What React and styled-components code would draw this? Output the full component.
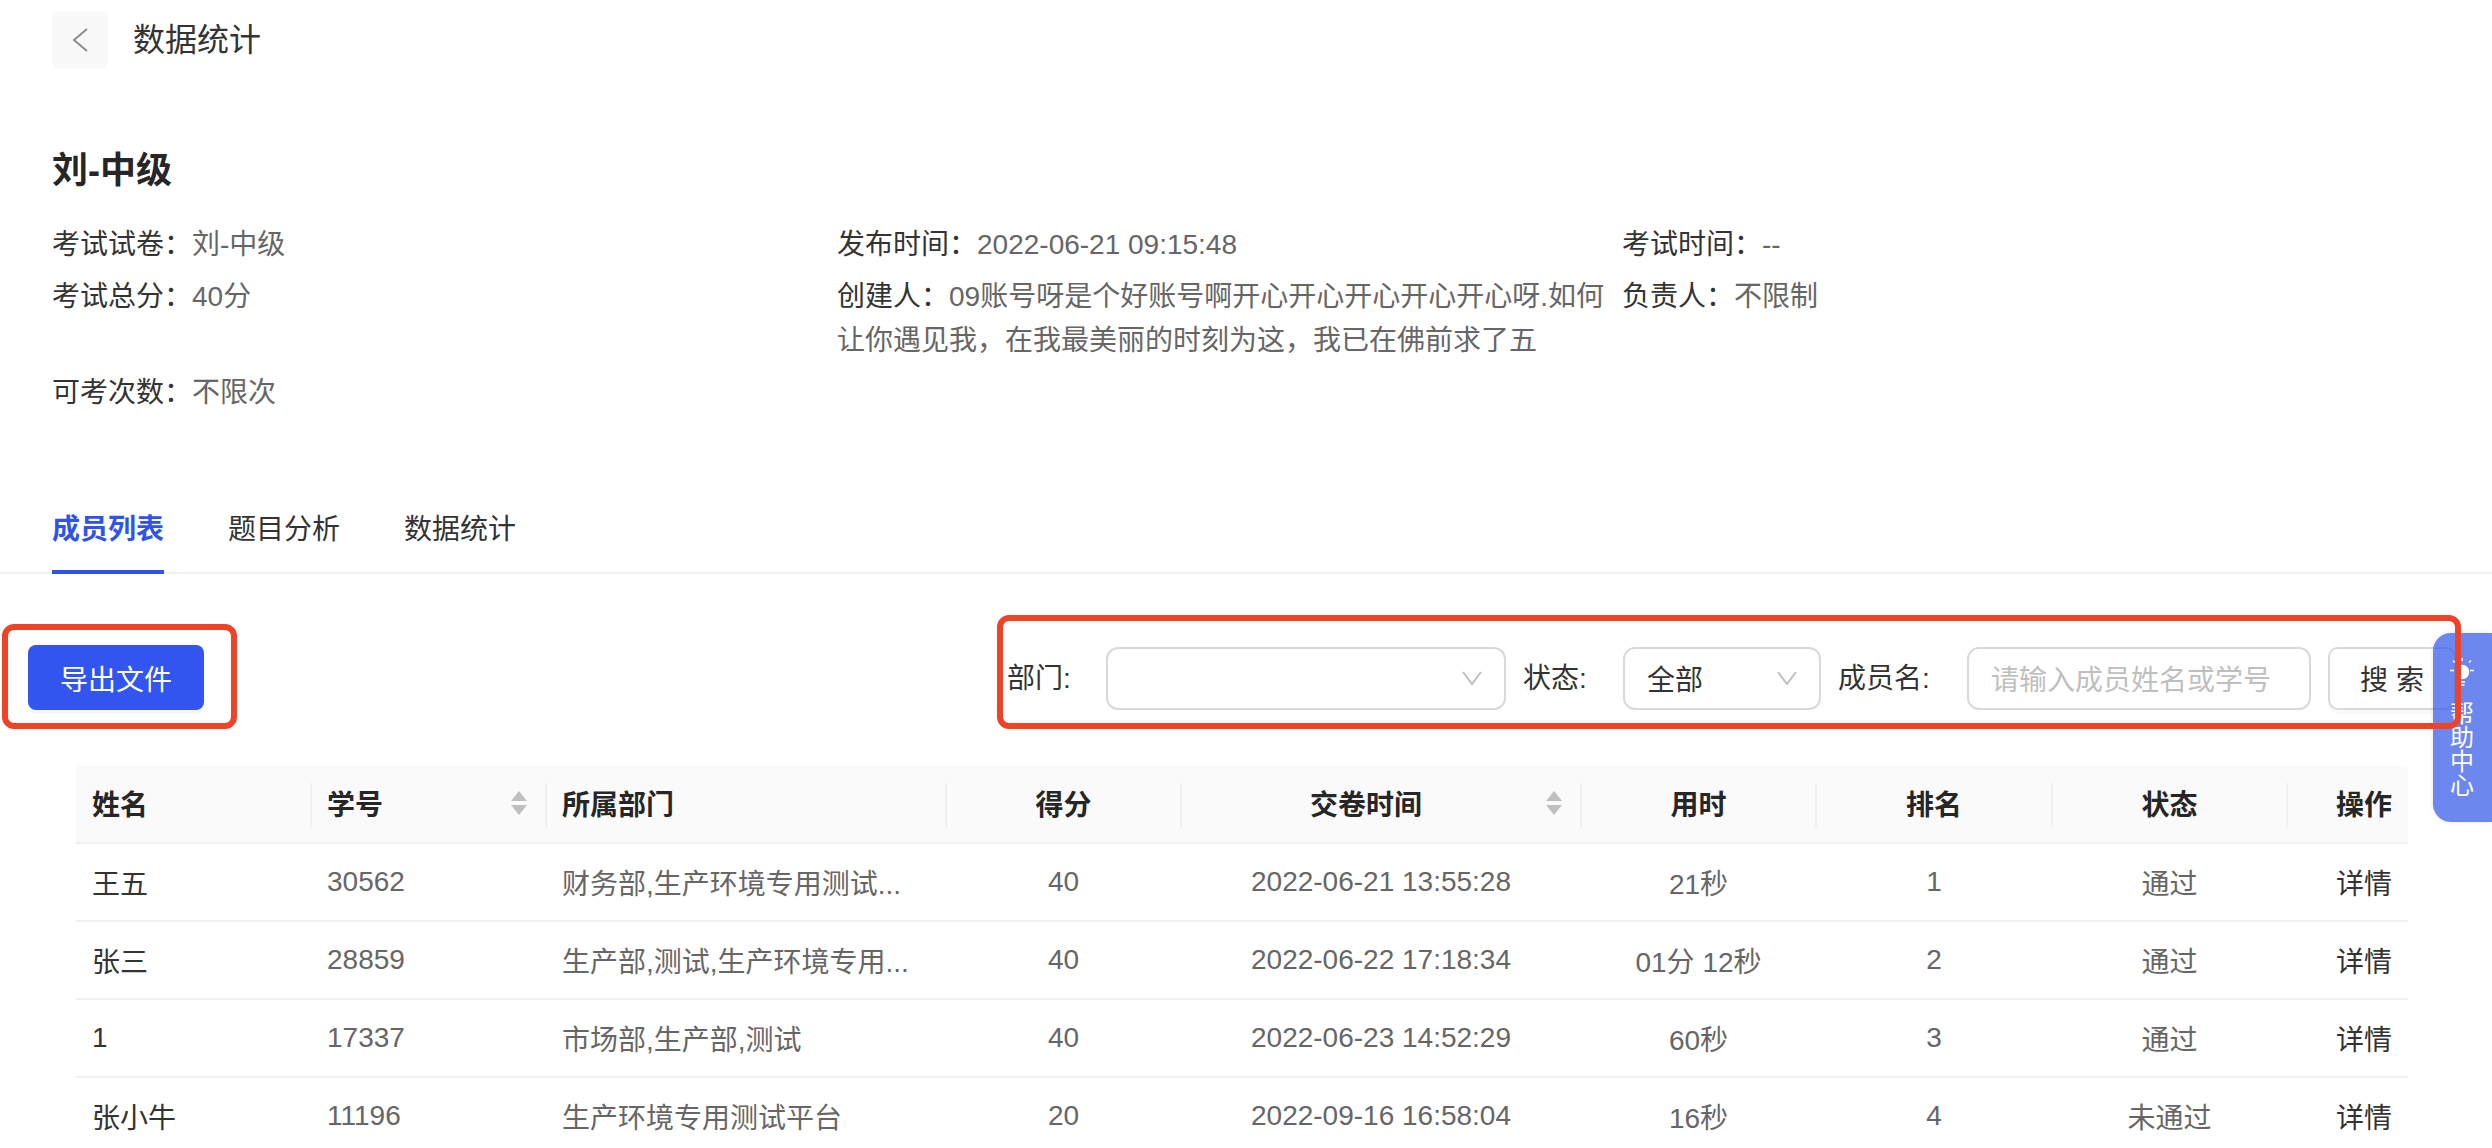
import React from 'react';
import styled, { createGlobalStyle } from 'styled-components';

const Global = createGlobalStyle`
  html, body { margin: 0; padding: 0; height: 100%; overflow: hidden; background: #fff; }
  body { font-family: "Liberation Sans", "Noto Sans CJK SC", sans-serif; font-size: 28px; color: #333; }
  * { box-sizing: border-box; }
`;

const Page = styled.div`
  position: relative;
  width: 2492px;
  height: 1148px;
  overflow: hidden;
`;

const TopBar = styled.header`
  display: flex;
  align-items: center;
  gap: 25px;
  padding: 12px 52px 0;
`;

const BackButton = styled.button`
  display: flex;
  align-items: center;
  justify-content: center;
  width: 56px;
  height: 56px;
  padding: 0;
  border: 0;
  border-radius: 8px;
  background: #f8f8f9;
  color: #8c8c8c;
`;

const PageTitle = styled.h1`
  margin: 0;
  font-size: 32px;
  font-weight: 400;
  line-height: 56px;
  color: #333;
`;

const Summary = styled.section`
  padding: 78px 0 0 52px;
`;

const ExamName = styled.h2`
  margin: 0 0 27px;
  font-size: 36px;
  font-weight: 700;
  line-height: 50px;
  color: #262626;
`;

const InfoGrid = styled.dl`
  display: grid;
  grid-template-columns: repeat(3, 785px);
  row-gap: 8px;
  margin: 0;
  line-height: 44px;
`;

const InfoItem = styled.div`
  margin: 0;
  color: #666;
`;

const InfoLabel = styled.span`
  color: #333;
`;

const Tabs = styled.nav`
  display: flex;
  gap: 64px;
  margin-top: 93px;
  padding-left: 52px;
  border-bottom: 2px solid #f0f0f0;
`;

const Tab = styled.a`
  position: relative;
  padding-bottom: 20px;
  line-height: 44px;
  font-weight: ${p => (p.$active ? 700 : 400)};
  color: ${p => (p.$active ? '#2f54eb' : '#333')};
  &::after {
    content: '';
    display: ${p => (p.$active ? 'block' : 'none')};
    position: absolute;
    left: 0;
    right: 0;
    bottom: -2px;
    height: 4px;
    background: #2f54eb;
  }
`;

const Toolbar = styled.div`
  display: flex;
  justify-content: space-between;
  align-items: flex-start;
  padding: 73px 36px 56px 28px;
`;

const Annotated = styled.div`
  position: relative;
  &::after {
    content: '';
    position: absolute;
    inset: ${p => p.$inset};
    border: 6px solid #ee4327;
    border-radius: 12px;
    z-index: 20;
    pointer-events: none;
  }
`;

const ExportWrap = styled(Annotated)`
  margin-top: -2px;
`;

const ExportButton = styled.button`
  display: block;
  width: 176px;
  height: 65px;
  padding: 0;
  border: 0;
  border-radius: 8px;
  background: #3155ee;
  box-shadow: 0 4px 0 rgba(0, 0, 0, 0.03);
  color: #fff;
  font: inherit;
`;

const Filters = styled(Annotated)`
  display: flex;
  align-items: center;
`;

const FilterLabel = styled.label`
  width: ${p => p.$w}px;
  color: #333;
  white-space: nowrap;
  line-height: 44px;
`;

const Field = styled.div`
  display: flex;
  align-items: center;
  justify-content: space-between;
  width: ${p => p.$w}px;
  height: 63px;
  margin-right: ${p => p.$mr}px;
  padding: 0 22px 2px;
  border: 2px solid #d9d9d9;
  border-radius: 12px;
  background: #fff;
  color: ${p => (p.$placeholder ? '#bfbfbf' : '#333')};
  white-space: nowrap;
`;

const Chevron = styled.svg`
  flex: none;
  color: #bfbfbf;
`;

const SearchButton = styled.button`
  width: 128px;
  height: 63px;
  padding: 0 0 2px;
  border: 2px solid #d9d9d9;
  border-radius: 10px;
  background: #fff;
  box-shadow: 0 4px 0 rgba(0, 0, 0, 0.02);
  color: #333;
  font: inherit;
`;

const TableWrap = styled.div`
  padding: 0 84px 0 76px;
`;

const Table = styled.table`
  width: 2332px;
  table-layout: fixed;
  border-collapse: separate;
  border-spacing: 0;
`;

const HeadCell = styled.th`
  position: relative;
  height: 78px;
  padding: 0 ${p => (p.$sort ? 19 : 16)}px 3px ${p => (p.$sort && p.$center ? 2 : 16)}px;
  background: #fafafa;
  border-bottom: 2px solid #f0f0f0;
  font-weight: 700;
  color: #262626;
  text-align: ${p => p.$align || 'left'};
  &:first-child { border-top-left-radius: 4px; }
  &:last-child { border-top-right-radius: 4px; }
  &:not(:first-child)::before {
    content: '';
    position: absolute;
    top: 17px;
    left: -1px;
    width: 2px;
    height: 44px;
    background: #f0f0f0;
  }
`;

const HeadInner = styled.div`
  display: flex;
  align-items: center;
  justify-content: space-between;
`;

const HeadText = styled.span`
  flex: 1;
  text-align: ${p => (p.$center ? 'center' : 'left')};
`;

const Sorter = styled.svg`
  flex: none;
  margin-left: -3px;
  color: #bfbfbf;
`;

const Cell = styled.td`
  height: 78px;
  padding: 0 16px 1px;
  border-bottom: 2px solid #f0f0f0;
  color: ${p => p.$color || '#666'};
  text-align: ${p => p.$align || 'left'};
  white-space: nowrap;
`;

const HelpTab = styled.aside`
  position: absolute;
  top: 633px;
  right: 0;
  width: 59px;
  height: 189px;
  z-index: 10;
  display: flex;
  flex-direction: column;
  align-items: center;
  padding: 25px 1px 0 0;
  border-radius: 18px 0 0 18px;
  background: rgba(47, 84, 235, 0.7);
  box-shadow: 0 0 4px rgba(0, 0, 0, 0.12);
  color: #fff;
`;

const HelpText = styled.div`
  margin-top: 16px;
  width: 24px;
  font-size: 24px;
  line-height: 24px;
  text-align: center;
`;

const widths = [235, 235, 400, 235, 400, 235, 236, 235, 121];

const columns = [
  { t: '姓名' },
  { t: '学号', sort: true },
  { t: '所属部门' },
  { t: '得分', align: 'center' },
  { t: '交卷时间', align: 'center', sort: true },
  { t: '用时', align: 'center' },
  { t: '排名', align: 'center' },
  { t: '状态', align: 'center' },
  { t: '操作', align: 'right' },
];

const rows = [
  ['王五', '30562', '财务部,生产环境专用测试...', '40', '2022-06-21 13:55:28', '21秒', '1', '通过'],
  ['张三', '28859', '生产部,测试,生产环境专用...', '40', '2022-06-22 17:18:34', '01分 12秒', '2', '通过'],
  ['1', '17337', '市场部,生产部,测试', '40', '2022-06-23 14:52:29', '60秒', '3', '通过'],
  ['张小牛', '11196', '生产环境专用测试平台', '20', '2022-09-16 16:58:04', '16秒', '4', '未通过'],
];

const DownIcon = () => (
  <Chevron width="20" height="14" viewBox="0 0 20 14" fill="none" stroke="currentColor" strokeWidth="2">
    <path d="M1 1l9 12 9-12" />
  </Chevron>
);

const SortIcon = () => (
  <Sorter width="16" height="24" viewBox="0 0 16 24" fill="currentColor">
    <path d="M8 0l8 10H0zM0 14h16l-8 10z" />
  </Sorter>
);

const BulbIcon = () => (
  <svg width="24" height="28" viewBox="0 0 24 28" fill="none" stroke="#fff" strokeWidth="1.500">
    <circle cx="12" cy="14" r="6.500" fill="#fff" />
    <path d="M9 24h6M9.500 27h5M0 12.500h4M20 12.500h4M3 2.500l2 2M21 2.500l-2 2M12 0v3" />
  </svg>
);

export default function App() {
  return (
    <Page>
      <Global />
      <TopBar>
        <BackButton aria-label="返回">
          <svg width="16" height="24" viewBox="0 0 16 24" fill="none" stroke="currentColor" strokeWidth="2">
            <path d="M15 1L2 12l13 11" />
          </svg>
        </BackButton>
        <PageTitle>数据统计</PageTitle>
      </TopBar>

      <Summary>
        <ExamName>刘-中级</ExamName>
        <InfoGrid>
          <InfoItem><InfoLabel>考试试卷：</InfoLabel>刘-中级</InfoItem>
          <InfoItem><InfoLabel>发布时间：</InfoLabel>2022-06-21 09:15:48</InfoItem>
          <InfoItem><InfoLabel>考试时间：</InfoLabel>--</InfoItem>
          <InfoItem><InfoLabel>考试总分：</InfoLabel>40分</InfoItem>
          <InfoItem><InfoLabel>创建人：</InfoLabel>09账号呀是个好账号啊开心开心开心开心开心呀.如何让你遇见我，在我最美丽的时刻为这，我已在佛前求了五</InfoItem>
          <InfoItem><InfoLabel>负责人：</InfoLabel>不限制</InfoItem>
          <InfoItem><InfoLabel>可考次数：</InfoLabel>不限次</InfoItem>
        </InfoGrid>
      </Summary>

      <Tabs>
        <Tab $active>成员列表</Tab>
        <Tab>题目分析</Tab>
        <Tab>数据统计</Tab>
      </Tabs>

      <Toolbar>
        <ExportWrap $inset="-21px -33px -19px -26px">
          <ExportButton>导出文件</ExportButton>
        </ExportWrap>
        <Filters $inset="-32px -5px -19px -10px">
          <FilterLabel $w={99}>部门:</FilterLabel>
          <Field $w={400} $mr={17}><span />
            <DownIcon />
          </Field>
          <FilterLabel $w={100}>状态:</FilterLabel>
          <Field $w={198} $mr={17}>全部<DownIcon /></Field>
          <FilterLabel $w={129}>成员名:</FilterLabel>
          <Field $w={344} $mr={17} $placeholder>请输入成员姓名或学号</Field>
          <SearchButton>搜 索</SearchButton>
        </Filters>
      </Toolbar>

      <TableWrap>
        <Table>
          <colgroup>
            {widths.map((w, i) => <col key={i} width={w} />)}
          </colgroup>
          <thead>
            <tr>
              {columns.map(c => (
                <HeadCell key={c.t} $align={c.align} $sort={c.sort} $center={c.align === 'center'}>
                  {c.sort ? (
                    <HeadInner>
                      <HeadText $center={c.align === 'center'}>{c.t}</HeadText>
                      <SortIcon />
                    </HeadInner>
                  ) : c.t}
                </HeadCell>
              ))}
            </tr>
          </thead>
          <tbody>
            {rows.map(r => (
              <tr key={r[1]}>
                {r.map((v, i) => (
                  <Cell key={i} $align={columns[i].align} $color={i === 0 ? '#333' : undefined}>{v}</Cell>
                ))}
                <Cell $align="right" $color="#333">详情</Cell>
              </tr>
            ))}
          </tbody>
        </Table>
      </TableWrap>

      <HelpTab>
        <BulbIcon />
        <HelpText>帮助中心</HelpText>
      </HelpTab>
    </Page>
  );
}
